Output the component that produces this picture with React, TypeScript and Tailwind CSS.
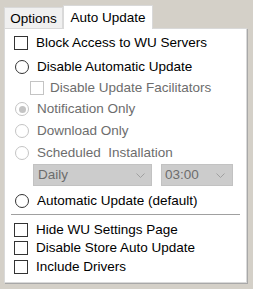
import React from "react";

const Box = ({ disabled = false }: { disabled?: boolean }) => (
  <span
    className={`inline-block w-[14px] h-[14px] bg-white border shrink-0 ${
      disabled ? "border-[#c4c4c4]" : "border-[#333333]"
    }`}
  />
);

const Radio = ({ disabled = false, checked = false }: { disabled?: boolean; checked?: boolean }) => (
  <span
    className={`flex items-center justify-center w-[14px] h-[14px] rounded-full bg-white border shrink-0 ${
      disabled ? "border-[#c4c4c4]" : "border-[#333333]"
    }`}
  >
    {checked && <span className="block w-[7px] h-[7px] rounded-full bg-[#c4c4c4]" />}
  </span>
);

const Chevron = () => (
  <svg width="9" height="5" viewBox="0 0 9 5" className="shrink-0">
    <path d="M0.5 0.5 L4.5 4.5 L8.5 0.5" fill="none" stroke="#a0a0a0" strokeWidth="1" />
  </svg>
);

export default function App() {
  const font = { fontFamily: '"Liberation Sans", Arial, sans-serif' };
  return (
    <div
      className="w-[253px] h-[289px] bg-[#d4d0c8] text-[13.5px] leading-none text-black overflow-hidden"
      style={font}
    >
      <div className="pl-[4px] pt-[5px] flex items-end h-[29px]">
        <div className="h-[21px] w-[59px] mb-[1px] bg-[#f0f0f0] border border-[#d9d9d9] border-b-0 flex items-center justify-center">
          <span className="mt-[1px]">Options</span>
        </div>
        <div className="relative z-10 h-[24px] w-[90px] bg-white border border-[#d9d9d9] border-b-0 flex items-start justify-center pt-[5px]">
          <span>Auto Update</span>
        </div>
      </div>
      <div className="ml-[4px] -mt-[1px] w-[243px] h-[255px] bg-white border border-[#d9d9d9] shadow-[1px_1px_0_#a8a8a8] flex flex-col pl-[9px] pt-[2px]">
        <div className="h-[24px] flex items-center gap-[8px]">
          <Box />
          <span>Block Access to WU Servers</span>
        </div>
        <div className="h-[24px] flex items-center gap-[8px] pl-[1px]">
          <Radio />
          <span>Disable Automatic Update</span>
        </div>
        <div className="h-[18px] flex items-center gap-[6px] pl-[16px] text-[#6d6d6d]">
          <Box disabled />
          <span>Disable Update Facilitators</span>
        </div>
        <div className="h-[24px] flex items-center gap-[8px] pl-[1px] text-[#6d6d6d]">
          <Radio disabled checked />
          <span>Notification Only</span>
        </div>
        <div className="h-[20px] flex items-center gap-[8px] pl-[1px] text-[#6d6d6d]">
          <Radio disabled />
          <span>Download Only</span>
        </div>
        <div className="h-[23px] flex items-center gap-[8px] pl-[1px] text-[#6d6d6d]">
          <Radio disabled />
          <span className="whitespace-pre">Scheduled  Installation</span>
        </div>
        <div className="h-[22px] flex gap-[9px] pl-[19px]">
          <div className="w-[119px] h-[22px] bg-[#cccccc] border border-[#c2c2c2] flex items-center justify-between pl-[4px] pr-[6px] text-[#6d6d6d]">
            <span>Daily</span>
            <Chevron />
          </div>
          <div className="w-[72px] h-[22px] bg-[#cccccc] border border-[#c2c2c2] flex items-center justify-between pl-[3px] pr-[7px] text-[#6d6d6d]">
            <span>03:00</span>
            <Chevron />
          </div>
        </div>
        <div className="h-[22px] mt-[4px] flex items-center gap-[8px] pl-[1px]">
          <Radio />
          <span>Automatic Update (default)</span>
        </div>
        <div className="mt-[2px] mr-[6px] -ml-[3px] h-[1px] bg-[#a0a0a0]" />
        <div className="h-[18px] mt-[6px] flex items-center gap-[8px]">
          <Box />
          <span>Hide WU Settings Page</span>
        </div>
        <div className="h-[18px] flex items-center gap-[8px]">
          <Box />
          <span>Disable Store Auto Update</span>
        </div>
        <div className="h-[20px] flex items-center gap-[8px]">
          <Box />
          <span>Include Drivers</span>
        </div>
      </div>
    </div>
  );
}
